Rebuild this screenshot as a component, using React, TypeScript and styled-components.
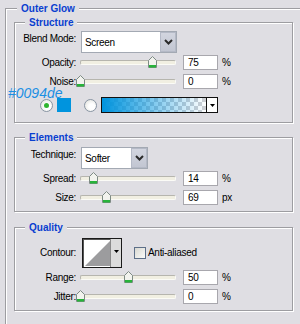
import React from 'react';
import styled, { createGlobalStyle } from 'styled-components';

const BG = '#dfdee3';

const Global = createGlobalStyle`
  html, body { margin: 0; padding: 0; background: ${BG}; }
  body {
    width: 300px; height: 324px; overflow: hidden;
    font-family: "Liberation Sans", Arial, sans-serif;
    font-size: 10px; letter-spacing: -0.3px; color: #000;
  }
`;

const Panel = styled.div`
  position: relative;
  margin: 8px 0 0 5px;
  height: 320px;
  border-top: 1px solid #9d9da1;
  border-left: 1px solid #9d9da1;
  box-shadow: inset 1px 1px 0 #fff;
  padding-left: 8px;
  display: flex;
  flex-direction: column;
`;

const Legend = styled.div<{ $indent: number }>`
  align-self: flex-start;
  margin: -7px 0 -6px ${p => p.$indent}px;
  height: 13px;
  line-height: 13px;
  padding: 0 4px;
  background: ${BG};
  color: #0a3fd0;
  font-weight: bold;
  font-size: 10px;
  letter-spacing: 0;
`;

const Frame = styled.section<{ $mt: number }>`
  width: 279px;
  box-sizing: border-box;
  margin-top: ${p => p.$mt}px;
  border: 1px solid #9d9da1;
  box-shadow: inset 1px 1px 0 #fff, 1px 1px 0 #fff;
  display: flex;
  flex-direction: column;
`;

const FrameBody = styled.div<{ $pt: number; $pb: number }>`
  padding: ${p => p.$pt}px 0 ${p => p.$pb}px 0;
  display: flex;
  flex-direction: column;
`;

const Row = styled.div<{ $h: number; $mt?: number }>`
  display: flex;
  align-items: center;
  height: ${p => p.$h}px;
  margin-top: ${p => p.$mt ?? 0}px;
`;

const Label = styled.span<{ $top?: boolean }>`
  flex: none;
  width: 61px;
  text-align: right;
  white-space: nowrap;
  line-height: 13px;
  ${p => (p.$top ? 'align-self: flex-start; margin-top: 1px;' : '')}
`;

const SelectBox = styled.div<{ $w: number }>`
  width: ${p => p.$w}px;
  height: 22px;
  margin-left: 5px;
  box-sizing: border-box;
  border: 1px solid #a3a9b3;
  background: #fff;
  display: flex;
  align-items: stretch;
`;

const SelectText = styled.span`
  flex: 1;
  padding-left: 3px;
  display: flex;
  align-items: center;
  padding-top: 1px;
`;

const SelectButton = styled.span`
  width: 16px;
  box-sizing: border-box;
  border: 1px solid #b4b9c6;
  background: linear-gradient(#d2d5df, #c2c6d2);
  display: flex;
  align-items: center;
  justify-content: center;
`;

const SliderWrap = styled.div`
  position: relative;
  width: 104px;
  height: 13px;
  display: flex;
  align-items: center;
`;

const Track = styled.div`
  flex: 1;
  margin: 0 4px;
  height: 3px;
  border: 1px solid #b6b5ae;
  border-bottom-color: #fbfbf6;
  border-right-color: #fbfbf6;
  border-radius: 2px;
  background: #f1efe2;
`;

const ThumbIcon = styled.svg`
  position: absolute;
  top: 0;
`;

const NumBox = styled.div`
  width: 35px;
  height: 15px;
  margin-left: 3px;
  box-sizing: border-box;
  border: 1px solid #a8a7ad;
  background: #fff;
  padding-left: 4px;
  line-height: 13px;
`;

const Unit = styled.span`
  margin-left: 4px;
`;

const Radio = styled.span<{ $checked?: boolean; $ml: number }>`
  flex: none;
  width: 13px;
  height: 13px;
  margin-left: ${p => p.$ml}px;
  box-sizing: border-box;
  border-radius: 50%;
  border: 1px solid #8995a3;
  background: radial-gradient(circle at 60% 60%, #ffffff 30%, #dcdcd6 100%);
  display: flex;
  align-items: center;
  justify-content: center;
  &::after {
    content: '';
    width: 5px;
    height: 5px;
    border-radius: 50%;
    background: #2fb52f;
    display: ${p => (p.$checked ? 'block' : 'none')};
  }
`;

const Swatch = styled.span<{ $color: string }>`
  flex: none;
  width: 14px;
  height: 14px;
  margin-left: 4px;
  background: ${p => p.$color};
`;

const GradientBox = styled.div`
  width: 117px;
  height: 16px;
  margin-left: 4px;
  box-sizing: border-box;
  border: 1px solid #111;
  display: flex;
`;

const GradientFill = styled.div`
  flex: 1;
  background:
    linear-gradient(to right, #0094de, rgba(0, 148, 222, 0.55) 45%, rgba(0, 148, 222, 0)),
    conic-gradient(#cfd0d4 25%, #fff 0 50%, #cfd0d4 0 75%, #fff 0) 0 0 / 8px 8px;
`;

const GradientArrow = styled.div`
  width: 10px;
  border-left: 1px solid #111;
  background: #fff;
  display: flex;
  align-items: center;
  justify-content: center;
`;

const ContourBox = styled.div`
  width: 40px;
  height: 30px;
  margin-left: 6px;
  box-sizing: border-box;
  border: 1px solid #1a1a1a;
  box-shadow: inset 1px 1px 0 #555;
  display: flex;
  background: #fff;
`;

const ContourPreview = styled.svg`
  flex: 1;
  display: block;
`;

const ContourArrow = styled.div`
  width: 11px;
  border-left: 1px solid #8a8a8a;
  background: #dcdcdc;
  display: flex;
  justify-content: center;
  padding-top: 11px;
  box-sizing: border-box;
`;

const CheckBox = styled.span`
  width: 12px;
  height: 12px;
  margin-left: 12px;
  box-sizing: border-box;
  border: 1px solid #5d6f88;
  background: linear-gradient(135deg, #d8d8d2, #fbfbf9);
`;

const CheckLabel = styled.span`
  margin-left: 2px;
`;

const Annotation = styled.span`
  position: absolute;
  left: 2px;
  top: 77px;
  font-size: 14px;
  line-height: 14px;
  font-style: italic;
  letter-spacing: 0;
  color: #1b8fe3;
`;

const Chevron = () => (
  <svg width="9" height="6" viewBox="0 0 9 6">
    <path d="M1 1 L4.5 4.5 L8 1" stroke="#2a2a2a" strokeWidth="2" fill="none" />
  </svg>
);

const DownTri = () => (
  <svg width="5" height="3" viewBox="0 0 5 3">
    <path d="M0 0 H5 L2.5 3 Z" fill="#000" />
  </svg>
);

const Slider = ({ pct }: { pct: number }) => (
  <SliderWrap>
    <Track />
    <ThumbIcon width="9" height="12" viewBox="0 0 9 12" style={{ left: 4 + pct * 96 - 4.5 }}>
      <path d="M4.5 0.5 L8.5 4.5 V11.5 H0.5 V4.5 Z" fill="#f2f3ee" stroke="#7e8b85" />
      <rect x="1" y="9" width="7" height="2.5" fill="#27b33a" />
    </ThumbIcon>
  </SliderWrap>
);

const SliderRow = ({ label, pct, value, unit }: { label: string; pct: number; value: string; unit: string }) => (
  <Row $h={19}>
    <Label>{label}</Label>
    <Slider pct={pct} />
    <NumBox>{value}</NumBox>
    <Unit>{unit}</Unit>
  </Row>
);

export default function App() {
  return (
    <>
      <Global />
      <Panel>
        <Legend $indent={3}>Outer Glow</Legend>
        <Annotation>#0094de</Annotation>

        <Frame $mt={13}>
          <Legend $indent={10}>Structure</Legend>
          <FrameBody $pt={8} $pb={9}>
            <Row $h={22}>
              <Label $top>Blend Mode:</Label>
              <SelectBox $w={96}>
                <SelectText>Screen</SelectText>
                <SelectButton><Chevron /></SelectButton>
              </SelectBox>
            </Row>
            <SliderRow label="Opacity:" pct={0.75} value="75" unit="%" />
            <SliderRow label="Noise:" pct={0} value="0" unit="%" />
            <Row $h={16} $mt={6}>
              <Radio $checked $ml={25} />
              <Swatch $color="#0094de" />
              <Radio $ml={13} />
              <GradientBox>
                <GradientFill />
                <GradientArrow><DownTri /></GradientArrow>
              </GradientBox>
            </Row>
          </FrameBody>
        </Frame>

        <Frame $mt={14}>
          <Legend $indent={10}>Elements</Legend>
          <FrameBody $pt={9} $pb={4}>
            <Row $h={22}>
              <Label $top>Technique:</Label>
              <SelectBox $w={67}>
                <SelectText>Softer</SelectText>
                <SelectButton><Chevron /></SelectButton>
              </SelectBox>
            </Row>
            <SliderRow label="Spread:" pct={0.14} value="14" unit="%" />
            <SliderRow label="Size:" pct={0.276} value="69" unit="px" />
          </FrameBody>
        </Frame>

        <Frame $mt={15}>
          <Legend $indent={10}>Quality</Legend>
          <FrameBody $pt={9} $pb={4}>
            <Row $h={31}>
              <Label>Contour:</Label>
              <ContourBox>
                <ContourPreview viewBox="0 0 27 28" preserveAspectRatio="none">
                  <path d="M2 27 L27 2 V27 Z" fill="#9c9c9e" />
                </ContourPreview>
                <ContourArrow><DownTri /></ContourArrow>
              </ContourBox>
              <CheckBox />
              <CheckLabel>Anti-aliased</CheckLabel>
            </Row>
            <SliderRow label="Range:" pct={0.5} value="50" unit="%" />
            <SliderRow label="Jitter:" pct={0} value="0" unit="%" />
          </FrameBody>
        </Frame>
      </Panel>
    </>
  );
}
